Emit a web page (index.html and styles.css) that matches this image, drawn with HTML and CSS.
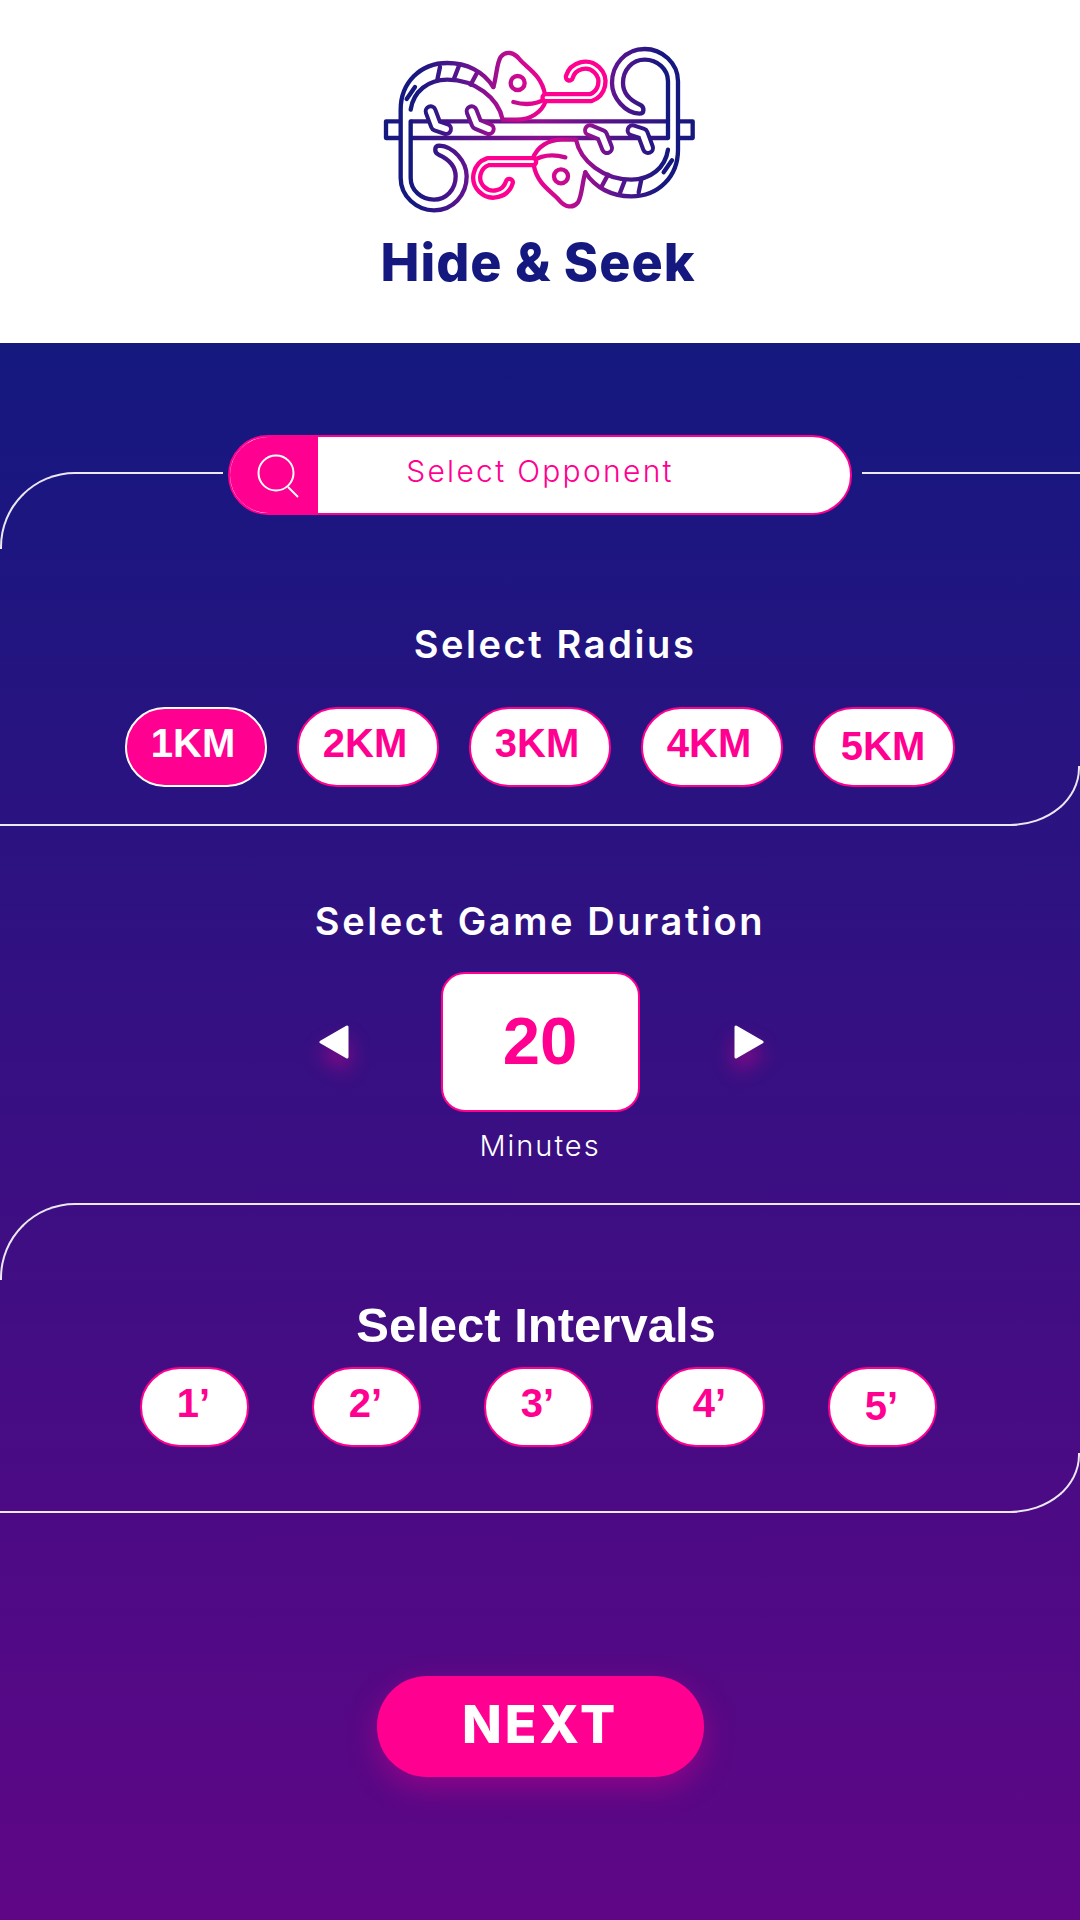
FILE: index.html
```html
<!DOCTYPE html>
<html lang="en">
<head>
  <meta charset="UTF-8">
  <meta name="viewport" content="width=device-width, initial-scale=1.0">
  <title>Hide &amp; Seek</title>
  <link rel="stylesheet" href="styles.css">
</head>
<body>
  <header class="brand">
    <!-- Logo: one chameleon, drawn twice, turned around the middle of the branch -->
    <svg class="brand-logo" viewBox="60 40 960 510" aria-label="Hide and Seek logo">
      <defs>
        <linearGradient id="skin" gradientUnits="userSpaceOnUse" x1="165" y1="0" x2="580" y2="0">
          <stop offset="0" stop-color="#14187f"/>
          <stop offset="0.35" stop-color="#5c1490"/>
          <stop offset="0.7" stop-color="#c00c90"/>
          <stop offset="1" stop-color="#ff0090"/>
        </linearGradient>
        <linearGradient id="wood" gradientUnits="userSpaceOnUse" x1="80" y1="0" x2="998" y2="0">
          <stop offset="0" stop-color="#14187f"/>
          <stop offset="0.5" stop-color="#8a1090"/>
          <stop offset="1" stop-color="#14187f"/>
        </linearGradient>
        <g id="chameleon" fill="none" stroke-linecap="round" stroke-linejoin="round">
          <g stroke="url(#skin)" stroke-width="13">
            <!-- body and tail -->
            <path d="M400 172 C370 125 320 100 262 100 C180 100 122 160 122 240 V445 C122 500 170 542 222 542 C280 542 320 495 320 440 C320 395 280 350 238 348 C222 348 222 368 236 375 C265 388 287 410 287 440 C287 480 258 510 222 510 C184 510 152 482 152 445 V275"/>
            <path d="M152 240 C160 185 205 150 262 150 C345 150 415 205 428 270"/>
            <path d="M165 172 L140 208 M240 112 L232 150 M297 108 L282 147 M352 128 L332 165"/>
            <!-- head -->
            <path d="M400 172 C410 140 410 100 422 82 C438 62 462 68 478 88 C500 115 545 135 555 195"/>
            <path d="M558 212 C545 250 510 270 470 270 H430"/>
            <path d="M460 217 C495 227 530 225 560 205"/>
            <circle cx="473" cy="160" r="21"/>
          </g>
          <!-- tongue -->
          <path d="M558 204 H692 A50 50 0 1 0 628 142" stroke="#ff0090" stroke-width="34"/>
          <path d="M558 204 H692 A50 50 0 1 0 628 142" stroke="#fff" stroke-width="8"/>
          <!-- legs -->
          <path d="M212 245 L228 288 L258 298" stroke="url(#skin)" stroke-width="42"/>
          <path d="M212 245 L228 288 L258 298" stroke="#fff" stroke-width="18"/>
          <path d="M335 245 L350 283 L386 298" stroke="url(#skin)" stroke-width="42"/>
          <path d="M335 245 L350 283 L386 298" stroke="#fff" stroke-width="18"/>
        </g>
      </defs>
      <path d="M122 275 H78 V325 H122 M152 275 H924 M152 325 H924 M954 275 H998 V325 H954" fill="none" stroke="url(#wood)" stroke-width="13" stroke-linejoin="round"/>
      <use href="#chameleon"/>
      <use href="#chameleon" transform="rotate(180 538 300)"/>
    </svg>
    <h1 class="brand-name">Hide &amp; Seek</h1>
  </header>

  <main class="setup">
    <section class="panel panel-radius">
      <span class="panel-line"></span>
      <div class="search">
        <span class="search-icon">
          <svg viewBox="0 0 50 50" width="50" height="50">
            <circle cx="23" cy="23" r="17.5" fill="none" stroke="#fff" stroke-width="2"/>
            <path d="M35 37 L45 47" stroke="#fff" stroke-width="2" fill="none"/>
          </svg>
        </span>
        <span class="search-text">Select Opponent</span>
      </div>
      <h2 class="title title-radius">Select Radius</h2>
      <div class="options">
        <button class="pill pill-active">1KM</button>
        <button class="pill">2KM</button>
        <button class="pill">3KM</button>
        <button class="pill">4KM</button>
        <button class="pill pill-low">5KM</button>
      </div>
    </section>

    <section class="duration">
      <h2 class="title">Select Game Duration</h2>
      <div class="stepper">
        <svg class="arrow" viewBox="0 0 30 34" width="30" height="34"><path d="M29 2 V32 L3 17 Z"/></svg>
        <div class="stepper-value">20</div>
        <svg class="arrow" viewBox="0 0 30 34" width="30" height="34"><path d="M3 2 V32 L29 17 Z"/></svg>
      </div>
      <p class="stepper-unit">Minutes</p>
    </section>

    <section class="panel panel-intervals">
      <h2 class="title title-intervals">Select Intervals</h2>
      <div class="options options-intervals">
        <button class="pill pill-small">1’</button>
        <button class="pill pill-small">2’</button>
        <button class="pill pill-small">3’</button>
        <button class="pill pill-small">4’</button>
        <button class="pill pill-small pill-low">5’</button>
      </div>
    </section>

    <button class="next-button">NEXT</button>
  </main>
</body>
</html>
```

FILE: styles.css
```css
* {
  box-sizing: border-box;
}

html, body {
  height: 100%;
}

body {
  margin: 0;
  font-family: Inter, "Noto Sans", sans-serif;
  background-color: #5f0686;
  overflow: hidden;
}

.brand {
  height: 343px;
  background-color: white;
  display: flex;
  flex-direction: column;
  align-items: center;
  padding-top: 43px;
}

.brand-logo {
  display: block;
  width: 320px;
  height: 170px;
}

.brand-name {
  margin: 22px 4px 0 0;
  font-size: 52px;
  line-height: 56px;
  font-weight: 800;
  letter-spacing: 1px;
  color: #14187f;
}

.setup {
  height: 1577px;
  padding-top: 129px;
  display: flex;
  flex-direction: column;
  align-items: stretch;
  background: linear-gradient(180deg, #14187f 0%, #5f0686 100%);
}

/* Top-left and bottom-right rounded lines around a panel */
.panel {
  position: relative;
}

.panel::before,
.panel::after {
  content: "";
  position: absolute;
  left: 0;
  right: 0;
  border: 0 solid #ece8f6;
  pointer-events: none;
}

.panel::before {
  top: 0;
  height: 75px;
  border-top-width: 2px;
  border-left-width: 2px;
  border-top-left-radius: 75px;
}

.panel::after {
  bottom: 0;
  height: 58px;
  border-bottom-width: 2px;
  border-right-width: 2px;
  border-bottom-right-radius: 70px 58px;
}

.panel-radius {
  height: 354px;
}

/* The top line stops short of the search box on this panel */
.panel-radius::before {
  right: auto;
  width: 221px;
}

.panel-line {
  position: absolute;
  top: 0;
  left: 862px;
  right: 0;
  height: 2px;
  background-color: #ece8f6;
}

.panel-intervals {
  height: 310px;
}

.search {
  position: relative;
  display: flex;
  width: 624px;
  height: 80px;
  margin: -37px 0 0 228px;
  border: 2px solid #ff0090;
  border-radius: 40px;
  background-color: white;
  overflow: hidden;
}

.search-icon {
  width: 88px;
  background-color: #ff0090;
  display: flex;
  align-items: center;
  justify-content: center;
  padding-left: 8px;
}

.search-text {
  flex-grow: 1;
  padding-right: 88px;
  text-align: center;
  line-height: 69px;
  font-size: 30px;
  font-weight: 300;
  letter-spacing: 2.3px;
  color: #ff0090;
}

.title {
  margin: 0;
  text-align: center;
  font-size: 38px;
  line-height: 50px;
  font-weight: 600;
  letter-spacing: 2.6px;
  color: white;
}

.title-radius {
  margin-top: 104px;
  padding-left: 30px;
}

.title-intervals {
  padding-top: 92px;
  padding-right: 8px;
  line-height: 60px;
  font-family: "Liberation Sans", Arial, sans-serif;
  font-size: 49px;
  font-weight: 700;
  letter-spacing: 0;
}

.options {
  display: flex;
  justify-content: center;
  gap: 30px;
  margin-top: 38px;
}

.options-intervals {
  gap: 63px;
  margin-top: 12px;
  padding-right: 3px;
}

.pill {
  width: 142px;
  height: 80px;
  padding: 0 6px 7px 0;
  border: 2px solid #ff0090;
  border-radius: 40px;
  background-color: white;
  color: #ff0090;
  font-family: "Liberation Sans", Arial, sans-serif;
  font-size: 40px;
  font-weight: 700;
}

.pill-active {
  background-color: #ff0090;
  border-color: white;
  color: white;
}

.pill-small {
  width: 109px;
  padding: 0 2px 7px 0;
}

.pill-low {
  padding: 0 2px 2px 0;
}

.duration {
  height: 377px;
  padding-top: 70px;
}

.stepper {
  display: flex;
  justify-content: center;
  align-items: center;
  gap: 93px;
  margin-top: 26px;
}

.stepper-value {
  width: 199px;
  height: 140px;
  border: 2px solid #ff0090;
  border-radius: 24px;
  background-color: white;
  color: #ff0090;
  text-align: center;
  font-family: "Liberation Sans", Arial, sans-serif;
  font-size: 67px;
  font-weight: 700;
  line-height: 134px;
}

.arrow {
  overflow: visible;
  fill: white;
  stroke: white;
  stroke-width: 3;
  stroke-linejoin: round;
  filter: drop-shadow(0 12px 10px rgba(255, 0, 144, 0.45));
}

.stepper-unit {
  margin: 14px 0 0;
  text-align: center;
  font-size: 29px;
  line-height: 40px;
  font-weight: 300;
  letter-spacing: 2px;
  color: white;
}

.next-button {
  width: 327px;
  height: 101px;
  margin: 163px auto 0;
  padding: 0 0 4px;
  border: none;
  border-radius: 50px;
  background-color: #ff0090;
  color: white;
  font-family: Inter, "Noto Sans", sans-serif;
  font-size: 52px;
  font-weight: 800;
  letter-spacing: 3px;
  box-shadow: 0 10px 30px rgba(255, 0, 144, 0.35);
}
```
